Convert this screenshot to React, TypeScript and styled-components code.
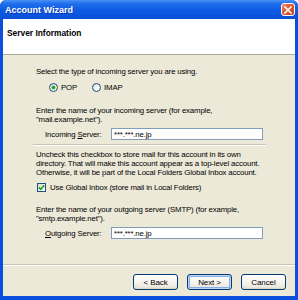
import styled, { createGlobalStyle } from 'styled-components';

const GlobalStyle = createGlobalStyle`
  html, body { margin: 0; padding: 0; background: #ffffff; }
  body { font-family: 'Liberation Sans', Arial, sans-serif; }
`;

const Window = styled.div`
  width: 298px;
  height: 300px;
  display: flex;
  flex-direction: column;
  background: #0b4fdc;
  border-radius: 6px 6px 0 0;
  overflow: hidden;
`;

const TitleBar = styled.div`
  height: 19px;
  flex-shrink: 0;
  display: flex;
  align-items: center;
  justify-content: space-between;
  padding: 0 3px 0 5px;
  background: linear-gradient(#4a92f6 0%, #2370ec 18%, #0f5de4 50%, #0a55dd 80%, #0a4ed4 100%);
  color: #ffffff;
  font-weight: 700;
  font-size: 9px;
  text-shadow: 1px 1px 0 rgba(10, 24, 131, 0.5);
`;

const CloseBtn = styled.div`
  width: 14px;
  height: 13px;
  box-sizing: border-box;
  border: 1px solid #ffffff;
  border-radius: 3px;
  background: linear-gradient(135deg, #f08a6a 0%, #e2572e 45%, #c8401c 100%);
  display: flex;
  align-items: center;
  justify-content: center;
`;

const Frame = styled.div`
  flex: 1;
  margin: 0 3px 4px;
  background: #ece9d8;
  display: flex;
  flex-direction: column;
  font-size: 7.8px;
  letter-spacing: -0.15px;
  line-height: 9px;
  color: #000000;
`;

const Header = styled.div`
  height: 36px;
  box-sizing: border-box;
  flex-shrink: 0;
  background: #ffffff;
  border-bottom: 1px solid #aca899;
  padding: 10px 0 0 4px;
  font-weight: 700;
  font-size: 8.4px;
  letter-spacing: 0;
`;

const Content = styled.div`
  flex: 1;
  padding: 0 29px 0 30px;
  display: flex;
  flex-direction: column;
`;

const Text = styled.div<{ $mt: number }>`
  margin: ${({ $mt }) => $mt}px 0 0 3px;
  white-space: nowrap;
`;

const OptionRow = styled.div<{ $mt: number; $indent: number }>`
  margin-top: ${({ $mt }) => $mt}px;
  padding-left: ${({ $indent }) => $indent}px;
  height: 9px;
  display: flex;
  align-items: center;
`;

const Option = styled.label<{ $gap?: number }>`
  display: flex;
  align-items: center;
  gap: ${({ $gap }) => $gap ?? 3}px;
  margin-right: 15px;
  white-space: nowrap;
`;

const Radio = styled.span<{ $on?: boolean }>`
  width: 9px;
  height: 9px;
  box-sizing: border-box;
  border-radius: 50%;
  border: 1px solid #1c5180;
  background: radial-gradient(circle at 60% 65%, #ffffff 0%, #e8e8e0 60%, #d4d2c8 100%);
  display: flex;
  align-items: center;
  justify-content: center;
  &::after {
    content: '';
    display: ${({ $on }) => ($on ? 'block' : 'none')};
    width: 3px;
    height: 3px;
    border-radius: 50%;
    background: #21a121;
    box-shadow: 0 0 0 0.5px #5cc25c;
  }
`;

const Check = styled.span`
  width: 9px;
  height: 9px;
  box-sizing: border-box;
  border: 1px solid #1c5180;
  background: linear-gradient(135deg, #dcdcd6 0%, #ffffff 100%);
  display: flex;
  align-items: center;
  justify-content: center;
`;

const FieldRow = styled.div<{ $mt: number }>`
  margin-top: ${({ $mt }) => $mt}px;
  padding-left: 12px;
  display: flex;
  align-items: center;
`;

const FieldLabel = styled.label`
  width: 66px;
  white-space: nowrap;
`;

const Input = styled.div`
  width: 152px;
  height: 12px;
  box-sizing: border-box;
  border: 1px solid #7f9db9;
  background: #ffffff;
  padding: 0 2px;
  display: flex;
  align-items: center;
`;

const Separator = styled.div<{ $mt: number }>`
  margin-top: ${({ $mt }) => $mt}px;
  height: 0;
  border-top: 1px solid #c8c5b6;
  border-bottom: 1px solid #ffffff;
`;

const Footer = styled.div`
  height: 32px;
  box-sizing: border-box;
  flex-shrink: 0;
  border-top: 1px solid #c8c5b6;
  box-shadow: inset 0 1px 0 #ffffff;
  padding: 9px 9px 0 0;
  display: flex;
  justify-content: flex-end;
  gap: 9px;
`;

const Button = styled.button<{ $default?: boolean }>`
  width: 45px;
  height: 16px;
  box-sizing: border-box;
  padding: 0;
  border: 1px solid #003c74;
  border-radius: 3px;
  background: linear-gradient(#ffffff 0%, #f5f4ee 50%, #ebe9e0 85%, #d8d2c2 100%);
  box-shadow: ${({ $default }) => ($default ? 'inset 0 0 0 1px #bcd4f6, inset 0 0 0 2px #89ade4' : 'none')};
  font-family: 'Liberation Sans', Arial, sans-serif;
  font-size: 8px;
  letter-spacing: -0.1px;
  color: #000000;
`;

const App = () => (
  <>
    <GlobalStyle />
    <Window>
      <TitleBar>
        <span>Account Wizard</span>
        <CloseBtn>
          <svg width="8" height="8" viewBox="0 0 8 8">
            <path d="M1 1 L7 7 M7 1 L1 7" stroke="#ffffff" strokeWidth="1.6" strokeLinecap="square" />
          </svg>
        </CloseBtn>
      </TitleBar>
      <Frame>
        <Header>Server Information</Header>
        <Content>
          <Text $mt={12}>Select the type of incoming server you are using.</Text>
          <OptionRow $mt={7} $indent={16}>
            <Option><Radio $on />POP</Option>
            <Option><Radio />IMAP</Option>
          </OptionRow>
          <Text $mt={14}>
            Enter the name of your incoming server (for example,
            <br />
            "mail.example.net").
          </Text>
          <FieldRow $mt={4}>
            <FieldLabel>Incoming <u>S</u>erver:</FieldLabel>
            <Input>***.***.ne.jp</Input>
          </FieldRow>
          <Separator $mt={4} />
          <Text $mt={4}>
            Uncheck this checkbox to store mail for this account in its own
            <br />
            directory. That will make this account appear as a top-level account.
            <br />
            Otherwise, it will be part of the Local Folders Global Inbox account.
          </Text>
          <OptionRow $mt={6} $indent={4}>
            <Option $gap={4}>
              <Check>
                <svg width="7" height="7" viewBox="0 0 7 7">
                  <path d="M0.8 3.4 L2.7 5.3 L6.2 1.4" stroke="#21a121" strokeWidth="1.6" fill="none" />
                </svg>
              </Check>
              Use Global Inbox (store mail in Local Folders)
            </Option>
          </OptionRow>
          <Text $mt={13}>
            Enter the name of your outgoing server (SMTP) (for example,
            <br />
            "smtp.example.net").
          </Text>
          <FieldRow $mt={4}>
            <FieldLabel><u>O</u>utgoing Server:</FieldLabel>
            <Input>***.***.ne.jp</Input>
          </FieldRow>
        </Content>
        <Footer>
          <Button>&lt; Back</Button>
          <Button $default>Next &gt;</Button>
          <Button>Cancel</Button>
        </Footer>
      </Frame>
    </Window>
  </>
);

export default App;
